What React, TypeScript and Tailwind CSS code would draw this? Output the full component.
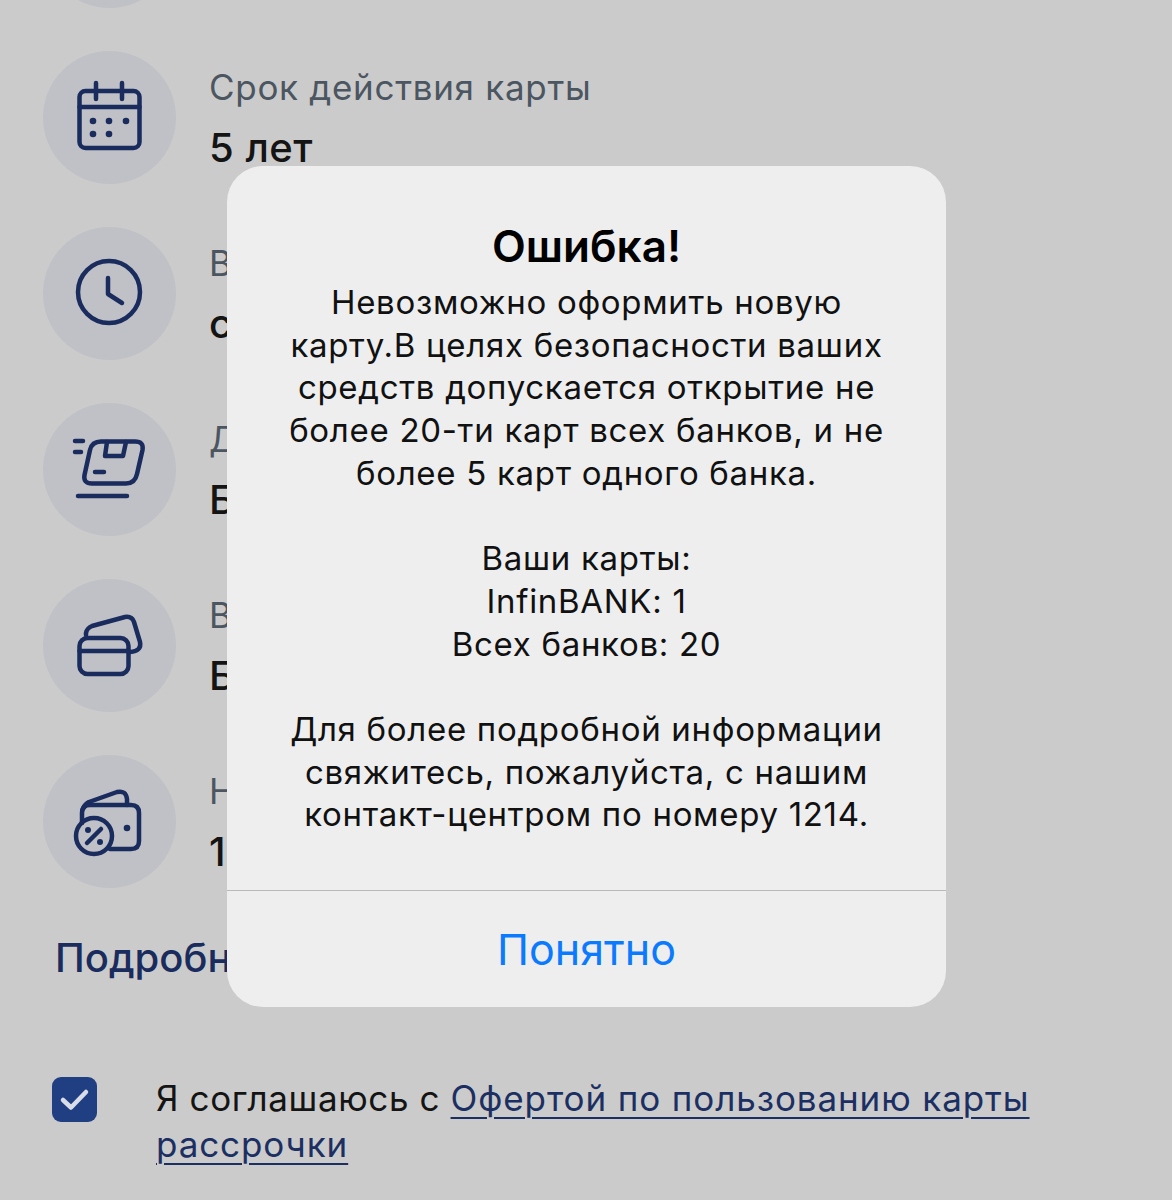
const rows = [
  { label: '', value: '', icon: 'none' },
  { label: 'Срок действия карты', value: '5 лет', icon: 'calendar' },
  { label: 'Время выпуска', value: 'сразу', icon: 'clock' },
  { label: 'Доставка', value: 'Бесплатно', icon: 'box' },
  { label: 'Выпуск', value: 'Бесплатно', icon: 'cards' },
  { label: 'Наценка', value: '10%', icon: 'wallet' },
];

function RowIcon({ name }: { name: string }) {
  return (
    <svg viewBox="0 0 133 133" className="h-[133px] w-[133px]" fill="none" stroke="#1a2b5e" strokeWidth="4.5" strokeLinecap="round" strokeLinejoin="round">
      {name === 'calendar' && (
        <>
          <rect x="36.5" y="40" width="60" height="57" rx="6" />
          <path d="M36.5 56H96.5M53 32V48M79 32V48" />
          <g fill="#1a2b5e" stroke="none">
            <circle cx="50" cy="70" r="3.3" />
            <circle cx="66" cy="70" r="3.3" />
            <circle cx="83" cy="70" r="3.3" />
            <circle cx="50" cy="83" r="3.3" />
            <circle cx="66" cy="83" r="3.3" />
          </g>
        </>
      )}
      {name === 'clock' && (
        <>
          <circle cx="66" cy="65" r="31" />
          <path d="M65 51V67L79 76" />
        </>
      )}
      {name === 'box' && (
        <>
          <path d="M58 38.5H92Q101 38.5 99.5 47L94 71Q92 80.5 83 80.5H49Q40 80.5 41.5 72L47 47Q49 38.5 58 38.5Z" />
          <path d="M64 39L62 53H80L83 39M52 69H61M32 38H40M32 49H38M35 93H84" />
        </>
      )}
      {name === 'cards' && (
        <>
          <rect x="36.5" y="59" width="49" height="36" rx="8" />
          <path d="M36.5 72H85.5M43 56V54Q44 49 49 47L82 38Q89 37 91 43L97 63Q99 72 87 73" />
        </>
      )}
      {name === 'wallet' && (
        <>
          <path d="M39 68V58Q39 50 47 50H88Q96 50 96 58V86Q96 94 88 94H67" />
          <path d="M40 54Q41 50 46 47L74 37Q83 35 84 44V50" />
          <circle cx="51" cy="81" r="18" />
          <path d="M44 88L58 74" />
          <g fill="#1a2b5e" stroke="none">
            <circle cx="84" cy="73" r="3.3" />
            <circle cx="45" cy="75" r="3" />
            <circle cx="57" cy="87" r="3" />
          </g>
        </>
      )}
    </svg>
  );
}

export default function App() {
  return (
    <div className="relative h-[1200px] w-[1172px] overflow-hidden bg-[#cbcbcb] font-['Inter','Noto_Sans',sans-serif]">
      <div className="-mt-[125px] flex flex-col gap-[43px] pl-[43px]">
        {rows.map((row) => (
          <div key={row.icon} className="flex items-center gap-[33px]">
            <div className="h-[133px] w-[133px] shrink-0 rounded-full bg-[#bfc1c6]">
              <RowIcon name={row.icon} />
            </div>
            {row.label && (
              <div className="flex flex-col gap-[15px]">
                <div className="-mt-[1px] text-[35px] leading-[46px] tracking-[0.7px] text-[#4b5661]">{row.label}</div>
                <div className="text-[40px] leading-[46px] tracking-[0.5px] font-medium text-[#141414]">{row.value}</div>
              </div>
            )}
          </div>
        ))}
      </div>

      <div className="mt-[45px] pl-[55px] text-[40px] leading-[50px] font-medium text-[#1a2b5e]">Подробнее о карте</div>

      <div className="mt-[94px] flex gap-[59px] pl-[52px]">
        <div className="flex h-[45px] w-[45px] shrink-0 items-center justify-center rounded-[9px] bg-[#1f3f82]">
          <svg viewBox="0 0 45 45" className="h-[45px] w-[45px]" fill="none" stroke="#d8dde8" strokeWidth="4.5" strokeLinecap="round" strokeLinejoin="round">
            <path d="M11 23L19 30.5L34 15" />
          </svg>
        </div>
        <div className="-mt-[2px] w-[920px] text-[35px] leading-[46px] tracking-[0.6px] text-[#141414]">
          Я соглашаюсь с <span className="tracking-[0.9px] text-[#1c2f63] underline underline-offset-[6px] decoration-2">Офертой по пользованию карты рассрочки</span>
        </div>
      </div>

      <div className="absolute left-[227px] top-[166px] flex h-[841px] w-[719px] flex-col rounded-[36px] bg-[#eeeeef] text-center text-black">
        <div className="h-[724px] pt-[55px]">
          <div className="text-[44px] leading-[50px] font-semibold">Ошибка!</div>
          <div className="mt-[10px] text-[33px] leading-[42.7px] tracking-[0.7px] text-[#111111]">
            Невозможно оформить новую<br />
            карту.В целях безопасности ваших<br />
            средств допускается открытие не<br />
            более 20-ти карт всех банков, и не<br />
            более 5 карт одного банка.<br />
            <br />
            Ваши карты:<br />
            InfinBANK: 1<br />
            Всех банков: 20<br />
            <br />
            Для более подробной информации<br />
            свяжитесь, пожалуйста, с нашим<br />
            контакт-центром по номеру 1214.
          </div>
        </div>
        <div className="flex flex-1 items-center justify-center border-t border-[#b9b9bb] text-[43px] text-[#0a7aff]">Понятно</div>
      </div>
    </div>
  );
}
